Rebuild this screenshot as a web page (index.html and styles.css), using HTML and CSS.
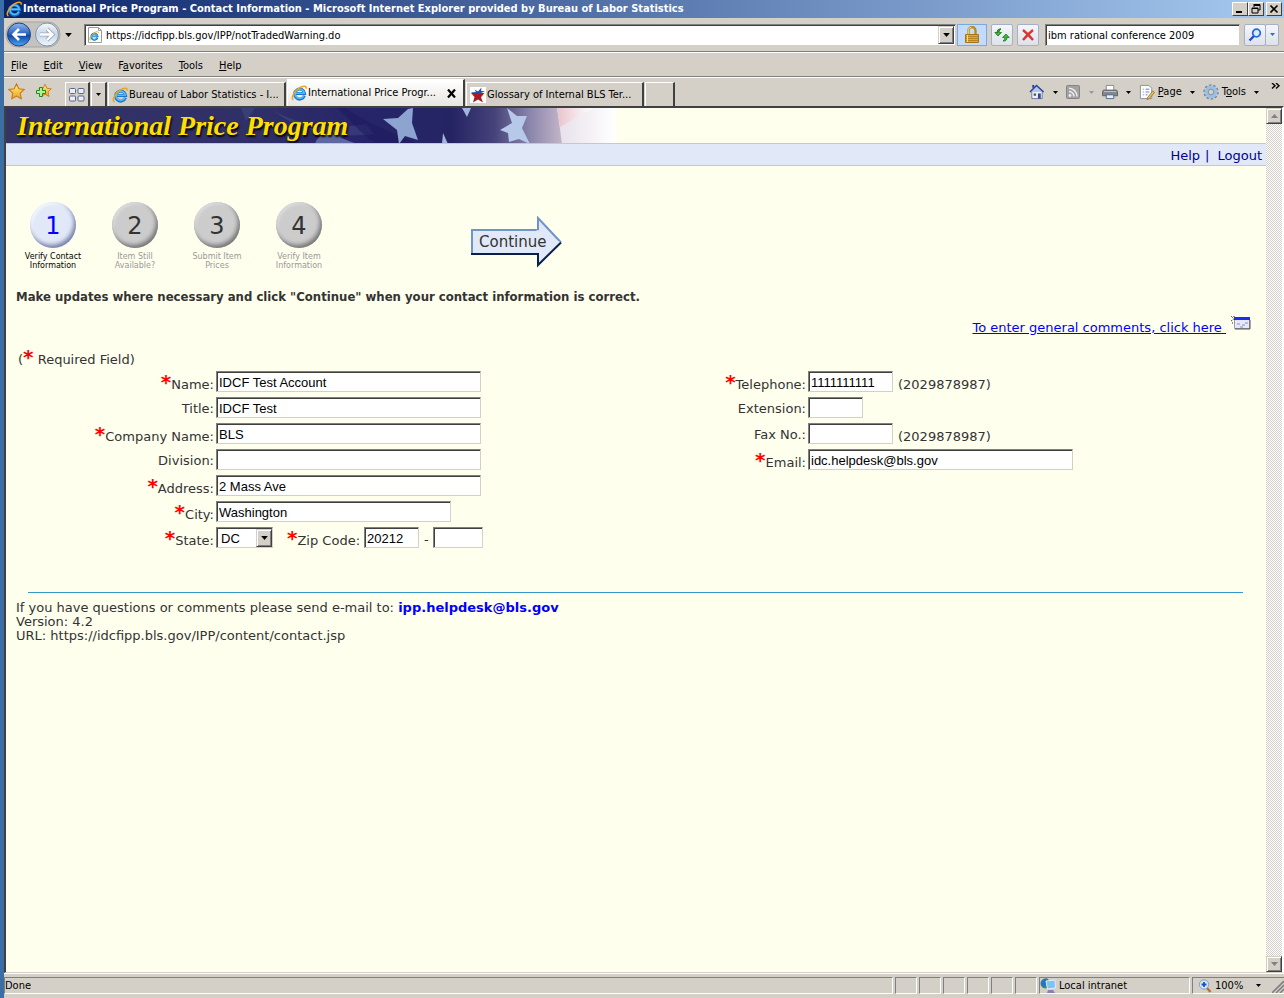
FILE: index.html
```html
<!DOCTYPE html>
<html lang="en">
<head>
<meta charset="utf-8">
<title>International Price Program - Contact Information</title>
<link rel="stylesheet" href="styles.css">
</head>
<body>
<svg class="defs" aria-hidden="true">
  <defs>
    <linearGradient id="gBlue" x1="0" y1="0" x2="0" y2="1"><stop offset="0" stop-color="#8fb8ea"/><stop offset=".45" stop-color="#2f67c4"/><stop offset=".55" stop-color="#1248a8"/><stop offset="1" stop-color="#4aa8f4"/></linearGradient>
    <linearGradient id="gPale" x1="0" y1="0" x2="0" y2="1"><stop offset="0" stop-color="#f4f8fc"/><stop offset=".5" stop-color="#c8d6e8"/><stop offset="1" stop-color="#f0f8ff"/></linearGradient>
    <linearGradient id="gStar" x1="0" y1="0" x2="0" y2="1"><stop offset="0" stop-color="#fff27a"/><stop offset="1" stop-color="#f0a020"/></linearGradient>
    <linearGradient id="gFlag" x1="0" y1="0" x2="1" y2="0"><stop offset="0" stop-color="#333366"/><stop offset=".4" stop-color="#303068"/><stop offset=".58" stop-color="#26256a"/><stop offset=".73" stop-color="#252463"/><stop offset=".8" stop-color="#45427a"/><stop offset=".86" stop-color="#8b86ac"/><stop offset=".91" stop-color="#c2b4c8"/><stop offset="1" stop-color="#ffffff"/></linearGradient>
    <linearGradient id="gPink" x1="0" y1="0" x2="1" y2="0"><stop offset="0" stop-color="#e8c4cc"/><stop offset="1" stop-color="#ffffff"/></linearGradient>
    <linearGradient id="gStripe" x1="0" y1="0" x2="1" y2="0"><stop offset="0" stop-color="#e6e0ea"/><stop offset="1" stop-color="#ffffff"/></linearGradient>
  </defs>
  <symbol id="ie" viewBox="0 0 16 16">
    <path d="M13.400 10.600A5 5 0 1 1 13.600 8.600H4.600" fill="none" stroke="#1c74cc" stroke-width="3"/>
    <path d="M12.900 10.400A4.600 4.600 0 1 1 13.200 8.300H4.800" fill="none" stroke="#4fbcf6" stroke-width="1.600"/>
    <path d="M2.400 15C-.6 13.600 3 6.600 8 3.200 12 .4 15.600.4 15.200 3.600" fill="none" stroke="#eea51c" stroke-width="1.500"/>
  </symbol>
  <symbol id="star" viewBox="0 0 16 16"><path d="M8 .8l2.200 4.700 5 .6-3.700 3.500 1 5.200L8 12.300l-4.500 2.500 1-5.200L.8 6.100l5-.6z" fill="url(#gStar)" stroke="#c8791a"/></symbol>
  <symbol id="caret" viewBox="0 0 5 3"><path d="M0 0h5L2.500 3z"/></symbol>
</svg>

<div class="window">
  <header class="titlebar">
    <svg class="i16"><use href="#ie"/></svg>
    <span class="title">International Price Program - Contact Information - Microsoft Internet Explorer provided by Bureau of Labor Statistics</span>
    <span class="winbtns">
      <button class="wb" aria-label="Minimize"><svg viewBox="0 0 12 10"><path d="M2 7h6v2H2z"/></svg></button>
      <button class="wb" aria-label="Restore"><svg viewBox="0 0 12 10"><path d="M4 .5h6V6H8M4 1.500h6M4 0v3M2 4h6v5H2zM2 4.500h6" fill="none" stroke="#000"/></svg></button>
      <button class="wb wbclose" aria-label="Close"><svg viewBox="0 0 12 10"><path d="M2.500 1.500l7 7m0-7l-7 7" stroke="#000" stroke-width="1.700"/></svg></button>
    </span>
  </header>

  <div class="navbar">
    <div class="nav">
      <button class="plain" aria-label="Back and forward"><svg width="56" height="28" viewBox="0 0 56 28">
        <rect x="1" y="1" width="54" height="25" rx="12" fill="#c4c2be" stroke="#a8a6a0"/>
        <circle cx="14" cy="13.500" r="11.500" fill="url(#gBlue)" stroke="#243f80"/>
        <path d="M21 13.500H9M14 8l-5.500 5.500L14 19" fill="none" stroke="#fff" stroke-width="2.600"/>
        <circle cx="42" cy="13.500" r="11.500" fill="url(#gPale)" stroke="#8294ac"/>
        <path d="M35 13.500h12M42 8l5.500 5.500L42 19" fill="none" stroke="#98a8bd" stroke-width="4"/>
        <path d="M35 13.500h12M42 8l5.500 5.500L42 19" fill="none" stroke="#fff" stroke-width="2.400"/>
      </svg></button>
      <svg class="c7"><use href="#caret"/></svg>
    </div>
    <div class="sunken address">
      <svg class="i16" viewBox="0 0 16 16"><path d="M1.500.5h10l3 3v12h-13z" fill="#fff" stroke="#9a9a9a"/><path d="M11.500.5v3h3" fill="none" stroke="#9a9a9a"/><use href="#ie" x="2" y="4" width="10" height="10"/></svg>
      <input class="ui" aria-label="Address" value="https://idcfipp.bls.gov/IPP/notTradedWarning.do">
      <button class="raised drop" aria-label="Address list"><svg class="c7"><use href="#caret"/></svg></button>
    </div>
    <button class="lock" aria-label="Security report"><svg width="16" height="18" viewBox="0 0 16 18"><path d="M4.500 9V4.500a3.500 3.500 0 0 1 7 0V9" fill="none" stroke="#b98a1c" stroke-width="2.400"/><path d="M4.300 8V4.500a3.500 3.500 0 0 1 3-3.400" fill="none" stroke="#f4dc86"/><path d="M1.500 8.500h13v8h-13z" fill="#dfa83a" stroke="#a97411"/><path d="M2 10.500h12M2 12.500h12M2 14.500h12" stroke="#b98420"/><path d="M3.500 9v7" stroke="#f7dc8c"/></svg></button>
    <button class="tool" aria-label="Refresh"><svg width="16" height="16" viewBox="0 0 16 16"><path d="M6.500 1.500L3.200 6M.8 5.500L4 9l3.500-3.500H5.300C5.200 4 5.500 3 7 2 4 1.500 3 3.500 3 5.500z" fill="#3fb53a" stroke="#177a1c" stroke-width=".8"/><path d="M15.200 10.500L12 7l-3.500 3.500h2.200c.1 1.500-.2 2.500-1.700 3.500 3 .5 4-1.500 4-3.500z" fill="#3fb53a" stroke="#177a1c" stroke-width=".8"/></svg></button>
    <button class="tool" aria-label="Stop"><svg width="14" height="14" viewBox="0 0 14 14"><path d="M2 2q5 4 10 10M12 2Q7 6 2 12" stroke="#d83434" stroke-width="2.400" fill="none"/></svg></button>
    <input class="sunken ui search" aria-label="Search" value="ibm rational conference 2009">
    <div class="find">
      <button class="tool" aria-label="Search web"><svg width="14" height="14" viewBox="0 0 14 14"><circle cx="8.500" cy="5" r="3.800" fill="#d8eefc" stroke="#2a6ae0" stroke-width="1.800"/><path d="M6 8l-4.500 4.500" stroke="#1d50c8" stroke-width="2.400"/></svg></button>
      <button class="tool small" aria-label="Search options"><svg class="c5 blue"><use href="#caret"/></svg></button>
    </div>
  </div>

  <nav class="menubar">
    <button class="plain"><u>F</u>ile</button><button class="plain"><u>E</u>dit</button><button class="plain"><u>V</u>iew</button><button class="plain">F<u>a</u>vorites</button><button class="plain"><u>T</u>ools</button><button class="plain"><u>H</u>elp</button>
  </nav>

  <div class="tabrow">
    <div class="favs">
      <button class="plain" aria-label="Favorites Center"><svg class="i17"><use href="#star"/></svg></button>
      <button class="plain" aria-label="Add to Favorites"><svg width="17" height="17" viewBox="0 0 17 17"><use href="#star" x="3" y="0" width="14" height="15"/><path d="M4.500 4.500h3v3h3v3h-3v3h-3v-3h-3v-3h3z" fill="#aef09a" stroke="#1c8a1c"/></svg></button>
    </div>
    <div class="tabs">
      <button class="tab quick" aria-label="Quick Tabs"><svg width="16" height="14" viewBox="0 0 16 14" fill="#eceff8" stroke="#5b6484"><rect x=".5" y=".5" width="6" height="5" rx="1"/><rect x="9" y=".5" width="6" height="5" rx="1"/><rect x=".5" y="8" width="6" height="5" rx="1"/><rect x="9" y="8" width="6" height="5" rx="1"/></svg></button>
      <button class="tab list" aria-label="Tab list"><svg class="c5"><use href="#caret"/></svg></button>
      <button class="tab page"><svg class="i16"><use href="#ie"/></svg>Bureau of Labor Statistics - I...</button>
      <button class="tab page active"><svg class="i16"><use href="#ie"/></svg>International Price Progr...<svg class="x" viewBox="0 0 10 9"><path d="M1 .5l7 8M8 .5l-7 8" stroke="#000" stroke-width="2.200"/></svg></button>
      <button class="tab page"><svg class="i16" viewBox="0 0 16 16"><path d="M0 0h16v16H0z" fill="#fff"/><path d="M1 6h13.500l-3.500 4.200 2 5.300-5-3-5 3 1.500-5.500z" fill="#b01820"/><path d="M4.500 2.500L8 4.500 11.500.5 11 4h4l-5 2.500H4L.8 5.500 6 5z" fill="#1c4fac"/></svg>Glossary of Internal BLS Ter...</button>
      <button class="tab blank" aria-label="New Tab"></button>
    </div>
    <div class="commands">
      <button class="plain" aria-label="Home"><svg width="16" height="16" viewBox="0 0 17 17"><path d="M3 8h11v7.500H3z" fill="#eef2fb" stroke="#6b7698"/><path d="M1 8.500L8 1.500l7.500 7" fill="#b4c4ea" stroke="#2a3f94" stroke-width="1.500"/><path d="M3.500 1h2v3h-2z" fill="#2a3f94"/><path d="M9.500 10h3v5.500h-3z" fill="#34489c"/><path d="M5 10h2.500v2.500H5z" fill="#555"/></svg></button><svg class="c5"><use href="#caret"/></svg>
      <button class="plain" aria-label="Feeds"><svg width="15" height="15" viewBox="0 0 15 15"><rect x=".5" y=".5" width="13" height="13" rx="1" fill="#a2a2a2" stroke="#858585"/><circle cx="4" cy="10.500" r="1.400" fill="#eee"/><path d="M3 6.500a5 5 0 0 1 5 5M3 3.300a8 8 0 0 1 8 8.200" fill="none" stroke="#eee" stroke-width="1.500"/></svg></button><svg class="c5 off"><use href="#caret"/></svg>
      <button class="plain" aria-label="Print"><svg width="16" height="16" viewBox="0 0 17 17"><path d="M4.500 1.500h8v6h-8z" fill="#fff" stroke="#888"/><path d="M1.500 6.500h14l1 2v4h-16v-4z" fill="#85878c" stroke="#5d5f64"/><path d="M2 8h13" stroke="#c4c4c4"/><path d="M4.500 11.500h8v4h-8z" fill="#e8f0f8" stroke="#4a6a8c"/><path d="M13 9.500h2" stroke="#4ac84a"/></svg></button><svg class="c5"><use href="#caret"/></svg>
      <button class="plain"><svg width="16" height="16" viewBox="0 0 17 17"><path d="M1.500 1.500h9l3 3v11h-12z" fill="#fff" stroke="#8a8f9e"/><path d="M4 5.500h1m2 0h4M4 8.500h1m2 0h4M4 11.500h1m2 0h2" stroke="#5577bb"/><path d="M9 14.500l5.500-7 2 1.500-5.500 6.500-2.500 1z" fill="#f0c050" stroke="#8a6420" stroke-width=".8"/></svg><span><u>P</u>age</span></button><svg class="c5"><use href="#caret"/></svg>
      <button class="plain"><svg width="16" height="16" viewBox="0 0 17 17"><circle cx="8.500" cy="8.500" r="7.200" fill="none" stroke="#7088a4" stroke-width="2" stroke-dasharray="2.600 1.900"/><circle cx="8.500" cy="8.500" r="5" fill="#d4d0c8" stroke="#9cc0e0" stroke-width="3.600"/><circle cx="8.500" cy="8.500" r="3" fill="#d4d0c8" stroke="#6080a0" stroke-width=".8"/></svg><span>T<u>o</u>ols</span></button><svg class="c5"><use href="#caret"/></svg>
      <button class="plain more" aria-label="More commands"><svg width="9" height="6" viewBox="0 0 9 6"><path d="M1 0l3 2.700-3 2.700M5 0l3 2.700-3 2.700" fill="none" stroke="#000" stroke-width="1.400"/></svg></button>
    </div>
  </div>

  <div class="viewport">
    <main class="document">
      <div class="banner">
        <svg width="610" height="36" viewBox="0 0 610 36" aria-hidden="true">
          <path d="M0 0h610v36H0z" fill="url(#gFlag)"/>
          <path d="M235 0h14l-9 13zM265 0c20 16 60 22 95 16l8 10c-45 6-85-8-103-26z" fill="#46508c" opacity=".45"/>
          <path d="M309 36c2-8 12-14 20-8l-2-6 8 8 16 6z" fill="#7583b8" opacity=".7"/>
          <path d="M340 0c22 16 42 22 72 36h-40C350 24 345 10 330 0z" fill="#1d1a5c" opacity=".55"/>
          <path d="M377 11l15-1L402 1l5-1-1 15 6 17-13-4-6 8-2-14z" fill="#8da3d0"/>
          <path d="M456 0h9l-4 9z" fill="#a5b4da"/><path d="M437 25l5 11h-6z" fill="#a5b4da"/>
          <path d="M494 22l12-7-5-15 10 8h10l-5 12 8 16-11-5-10 3-1-9z" fill="#b7c9e8"/>
          <path d="M551 0h59v36h-54l-2-15z" fill="url(#gStripe)"/>
          <path d="M551 0h36l-33 19z" fill="url(#gPink)"/>
        </svg>
        <h1>International Price Program</h1>
      </div>
      <div class="linkbar"><a href="#help">Help</a><span>|</span><a href="#logout">Logout</a></div>

      <div class="content">
        <div class="steps">
          <div class="step current"><span class="ball">1</span><span class="cap">Verify Contact<br>Information</span></div>
          <div class="step"><span class="ball">2</span><span class="cap">Item Still<br>Available?</span></div>
          <div class="step"><span class="ball">3</span><span class="cap">Submit Item<br>Prices</span></div>
          <div class="step"><span class="ball">4</span><span class="cap">Verify Item<br>Information</span></div>
          <button class="plain continue" form="contact"><svg width="92" height="52" viewBox="0 0 92 52" aria-hidden="true"><path d="M1 38V14h66V2l23 24.500" fill="#e1e8f7" stroke="#6f94c8" stroke-width="2"/><path d="M1 38h66v12l23-23.500L67 14" fill="#e1e8f7"/><path d="M0 38h67v11l23-22.500" fill="none" stroke="#0a1f4c" stroke-width="2"/></svg><span>Continue</span></button>
        </div>

        <p class="lead">Make updates where necessary and click "Continue" when your contact information is correct.</p>
        <p class="comments"><a href="#comments">To enter general comments, click here&nbsp;</a><svg width="20" height="14" viewBox="0 0 20 14" aria-hidden="true"><path d="M3.500 2.500h15v10h-15z" fill="#e4e8f8" stroke="#9a9aa8"/><path d="M3 1h16v3H3z" fill="#1a2ef0"/><path d="M19 4v9H4" fill="none" stroke="#555" /><path d="M6 8h3m2 1h3m-5 2h3m2-4h3" stroke="#7d8fdc"/><path d="M0 0l4 4M0 5l3-2M3 0v2M1 7h2" stroke="#222" stroke-dasharray="1 1"/></svg></p>
        <p class="required">(<b class="ast">*</b> Required Field)</p>

        <form id="contact" class="form">
          <div class="fields left">
            <label class="req" for="name"><b class="ast">*</b>Name:</label><div><input class="sunken w265" id="name" value="IDCF Test Account"></div>
            <label for="jobtitle">Title:</label><div><input class="sunken w265" id="jobtitle" value="IDCF Test"></div>
            <label class="req" for="company"><b class="ast">*</b>Company Name:</label><div><input class="sunken w265" id="company" value="BLS"></div>
            <label for="division">Division:</label><div><input class="sunken w265" id="division"></div>
            <label class="req" for="address"><b class="ast">*</b>Address:</label><div><input class="sunken w265" id="address" value="2 Mass Ave"></div>
            <label class="req" for="city"><b class="ast">*</b>City:</label><div><input class="sunken w235" id="city" value="Washington"></div>
            <label class="req" for="state"><b class="ast">*</b>State:</label>
            <div><span class="selectbox"><select class="sunken" id="state"><option>DC</option></select><span class="raised arrow"><svg class="c7"><use href="#caret"/></svg></span></span>
              <label class="req zip" for="zip"><b class="ast">*</b>Zip Code:</label><input class="sunken w55" id="zip" value="20212"><span class="dash">-</span><input class="sunken w50" aria-label="Zip code extension"></div>
          </div>
          <div class="fields right">
            <label class="req" for="tel"><b class="ast">*</b>Telephone:</label><div><input class="sunken w85" id="tel" value="1111111111"><span class="hint">(2029878987)</span></div>
            <label for="ext">Extension:</label><div><input class="sunken w55" id="ext"></div>
            <label for="fax">Fax No.:</label><div><input class="sunken w85" id="fax"><span class="hint">(2029878987)</span></div>
            <label class="req" for="email"><b class="ast">*</b>Email:</label><div><input class="sunken w265" id="email" value="idc.helpdesk@bls.gov"></div>
          </div>
        </form>

        <hr>
        <footer class="foot">
          <p>If you have questions or comments please send e-mail to: <a href="mailto:ipp.helpdesk@bls.gov">ipp.helpdesk@bls.gov</a></p>
          <p>Version: 4.2</p>
          <p>URL: https://idcfipp.bls.gov/IPP/content/contact.jsp</p>
        </footer>
      </div>
    </main>
    <div class="scroll">
      <button class="raised" aria-label="Scroll up"><svg class="c7 gray" viewBox="0 0 7 4"><path d="M0 4h7L3.500 0z"/></svg></button>
      <button class="raised" aria-label="Scroll down"><svg class="c7 gray" viewBox="0 0 7 4"><path d="M0 0h7L3.500 4z"/></svg></button>
    </div>
  </div>

  <div class="status">
    <span class="cell grow">Done</span><span class="cell box"></span><span class="cell box"></span><span class="cell box"></span><span class="cell box"></span><span class="cell box"></span><span class="cell box"></span>
    <span class="cell zone"><svg class="i16" viewBox="0 0 16 16"><circle cx="5.500" cy="5.500" r="5" fill="#2f9a48"/><path d="M1 4q4-5 7-3-4 3-1 5-3 2-3 4-3-2-3-6z" fill="#2c6fd0"/><path d="M6 3l9-1 .5 8-8 1z" fill="#7cc4f6" stroke="#e4ecf8"/><path d="M8 12h5l2 3H7z" fill="#8a80b8"/></svg>Local intranet</span>
    <span class="cell zoom"><svg class="i14" viewBox="0 0 14 14"><path d="M9 9l3.500 4" stroke="#b8722c" stroke-width="2.400"/><circle cx="6" cy="5.500" r="4.600" fill="#d8ecfc" stroke="#7d9cc4"/><path d="M6 3v5M3.500 5.500h5" stroke="#1a50d0" stroke-width="1.800"/></svg>100%<svg class="c5"><use href="#caret"/></svg><svg class="grip" viewBox="0 0 12 12"><path d="M0 12L12 0M4 12l8-8M8 12l4-4" stroke="#808080" stroke-width="1.600"/></svg></span>
  </div>
</div>
</body>
</html>
```
FILE: styles.css
```css
* { box-sizing: border-box; }
body {
  margin: 0;
  background: #3a6ea5;
  color: #333;
  font: 13px/14px "DejaVu Sans", Verdana, sans-serif;
}
p, h1 { margin: 0; }
svg { display: block; flex: none; }
button, input, select { font: inherit; color: #000; }
button { padding: 0; }
.defs { position: absolute; width: 0; height: 0; }
.window {
  min-height: 100vh;
  margin-left: 4px;
  display: flex;
  flex-direction: column;
  background: #d4d0c8;
  color: #000;
  font: 11px/14px "DejaVu Sans Condensed", Tahoma, sans-serif;
}
.i14 { width: 14px; height: 14px; }
.i16 { width: 16px; height: 16px; }
.i17 { width: 17px; height: 17px; }
.c7 { width: 7px; height: 4px; }
.c5 { width: 5px; height: 3px; }
.blue { fill: #2a6ae0; }
.gray { fill: #808080; }
.off { fill: #999; }
.plain { border: 0; background: none; }
.sunken {
  border: 1px solid;
  border-color: #808080 #d4d0c8 #d4d0c8 #808080;
  box-shadow: inset 1px 1px #404040;
  background: #fff;
  border-radius: 0;
  outline: 0;
}
.raised {
  display: flex;
  align-items: center;
  justify-content: center;
  border: 1px solid;
  border-color: #d4d0c8 #404040 #404040 #d4d0c8;
  box-shadow: inset 1px 1px #fff, inset -1px -1px #808080;
  background: #d4d0c8;
}

/* Title bar */
.titlebar {
  display: flex;
  align-items: center;
  gap: 1px;
  height: 18px;
  padding: 0 2px;
  background: linear-gradient(90deg, #0a246a, #a6caf0);
}
.title { flex: 1; min-width: 0; overflow: hidden; white-space: nowrap; color: #fff; font-weight: bold; }
.winbtns { display: flex; }
.wb {
  width: 16px;
  height: 14px;
  border: 1px solid;
  border-color: #fff #404040 #404040 #fff;
  background: #d4d0c8;
}
.wb svg { width: 12px; height: 10px; margin: auto; }
.wbclose { margin-left: 2px; }

/* Navigation bar */
.navbar {
  display: flex;
  align-items: center;
  height: 34px;
  padding: 0 5px 0 1px;
  border-bottom: 1px solid #808080;
}
.nav { display: flex; align-items: center; gap: 4px; width: 79px; }
.address { flex: 1; display: flex; align-items: center; height: 22px; padding: 1px 1px 0 2px; }
.address input { flex: 1; min-width: 0; margin-left: 1px; border: 0; outline: 0; background: none; }
.drop { width: 16px; height: 18px; }
.ui { height: 17px; padding: 1px 2px 0; }
.lock {
  display: grid;
  place-items: center;
  width: 30px;
  height: 22px;
  margin: 0 4px 0 1px;
  border: 1px solid #7da7e0;
  background: #c2dcff;
}
.tool {
  display: grid;
  place-items: center;
  width: 22px;
  height: 22px;
  margin-right: 4px;
  border: 1px solid #a3b0c8;
  border-radius: 2px;
  background: linear-gradient(#f4f6fa, #dde2ea);
}
.search { width: 195px; height: 22px; margin: 0 4px 0 2px; }
.find { display: flex; }
.find .tool { margin: 0; }
.find .small { width: 14px; margin-left: -1px; }

/* Menu bar */
.menubar {
  display: flex;
  gap: 16px;
  height: 25px;
  padding: 2px 0 0 7px;
  border-top: 1px solid #fff;
  border-bottom: 1px solid #808080;
}

/* Tabs and commands */
.tabrow {
  display: flex;
  height: 29px;
  border-top: 1px solid #fff;
}
.favs { display: flex; gap: 10px; width: 61px; padding: 0 4px 2px; }
.tabs { display: flex; align-items: flex-end; gap: 1px; }
.tab {
  display: flex;
  align-items: center;
  height: 24px;
  border: solid;
  border-width: 1px 2px 0 1px;
  border-color: #fff #404040 #404040 #fff;
  background: #d4d0c8;
  white-space: nowrap;
}
.quick { width: 25px; justify-content: center; }
.list { width: 16px; justify-content: center; }
.page { width: 178px; padding-left: 3px; gap: 1px; }
.active { height: 27px; background: linear-gradient(#fff, #e8e6e0); }
.x { width: 10px; height: 9px; margin: 0 6px 0 auto; }
.blank { width: 30px; }
.commands { display: flex; align-items: center; gap: 8px; margin-left: auto; padding-right: 4px; }
.commands .plain { display: flex; align-items: center; gap: 3px; }
.commands .more { align-self: flex-start; padding: 5px 0 0 4px; }

/* Page viewport */
.viewport {
  flex: 1;
  display: flex;
  border: solid;
  border-width: 2px 2px 1px 2px;
  border-color: #404040 #fff #d4d0c8 #404040;
}
.document {
  flex: 1;
  min-width: 0;
  background: #ffffee;
  color: #333;
  font: 13px/14px "DejaVu Sans", Verdana, sans-serif;
}
.banner { display: grid; height: 35px; overflow: hidden; }
.banner > * { grid-area: 1 / 1; }
.banner h1 {
  padding-left: 11px;
  color: #ffdf00;
  font: italic bold 28px/35px "Liberation Serif", serif;
  text-shadow: 1px 2px 2px #000;
}
.linkbar {
  display: flex;
  justify-content: flex-end;
  align-items: center;
  gap: 5px;
  height: 23px;
  padding: 2px 4px 0 0;
  border: solid #c8c8c8;
  border-width: 1px 0;
  background: #e1e8f7;
  color: #000099;
}
.linkbar a { color: #000099; text-decoration: none; }
.linkbar a:last-child { margin-left: 3px; }
.content { padding: 36px 10px 0; }

/* Progress steps */
.steps { display: flex; align-items: flex-start; margin-left: -4px; }
.step { display: flex; flex-direction: column; align-items: center; width: 82px; gap: 4px; color: #999; text-align: center; }
.ball {
  display: grid;
  place-items: center;
  width: 46px;
  height: 46px;
  padding-top: 2px;
  border-radius: 50%;
  background: #ccc;
  box-shadow: inset -2px -3px 4px #777, inset 2px 2px 3px #ddd;
  color: #333;
  font-size: 24px;
}
.current .ball { background: #e1e8f7; box-shadow: inset -2px -3px 4px #7780aa, inset 2px 2px 3px #f4f7ff; color: #00f; }
.cap { font-size: 8px; line-height: 9px; }
.current .cap { color: #000; }
.continue { display: grid; margin: 14px 0 0 131px; }
.continue > * { grid-area: 1 / 1; }
.continue span { align-self: center; padding-left: 8px; text-align: left; color: #333; font-size: 15px; }

.lead { margin-top: 20px; font-family: "DejaVu Sans Condensed", Verdana, sans-serif; font-weight: bold; }
.comments { display: flex; justify-content: flex-end; gap: 5px; margin-top: 12px; padding-right: 5px; }
.comments a { margin-top: 5px; color: #00f; }
.required { margin: 18px 0 4px 2px; }
.ast { color: #f00; font-size: 20px; line-height: 0; }

/* Contact form */
.form { display: grid; grid-template-columns: 1fr 1fr; }
.fields { display: grid; gap: 5px 2px; align-content: start; align-items: center; grid-auto-rows: 21px; }
.left { grid-template-columns: 198px 1fr; }
.right { grid-template-columns: 170px 1fr; }
.fields label { text-align: right; white-space: nowrap; padding-top: 3px; }
.fields label.req { padding-top: 7px; }
.fields > div { display: flex; align-items: center; }
.fields input, .fields select { height: 21px; padding: 2px 2px 0; font: 13px/15px "Liberation Sans", Arial, sans-serif; }
.w265 { width: 265px; }
.w235 { width: 235px; }
.w85 { width: 85px; }
.w55 { width: 55px; }
.w50 { width: 50px; }
.selectbox { position: relative; }
.fields select { display: block; width: 57px; padding-left: 4px; appearance: none; }
.arrow { position: absolute; top: 2px; right: 1px; width: 16px; height: 18px; pointer-events: none; }
.zip { margin: 0 4px 0 14px; }
.dash { margin: 4px 4px 0 5px; }
.hint { margin: 7px 0 0 5px; }

hr { height: 1px; margin: 44px 13px 8px 12px; border: 0; background: #3399cc; }
.foot a { color: #00f; font-weight: bold; text-decoration: none; }

/* Scroll bar */
.scroll {
  display: flex;
  flex-direction: column;
  justify-content: space-between;
  width: 16px;
  background: repeating-conic-gradient(#fff 0 25%, #d4d0c8 0 50%) 0 0 / 2px 2px;
}
.scroll button { width: 16px; height: 16px; }

/* Status bar */
.status {
  display: flex;
  gap: 2px;
  height: 25px;
  padding: 3px 0 4px;
  border-top: 1px solid #fff;
}
.cell {
  display: flex;
  align-items: center;
  gap: 3px;
  border: 1px solid;
  border-color: #808080 #fff #fff #808080;
}
.grow { flex: 1; }
.box { width: 22px; }
.zone { width: 151px; }
.zoom { width: 92px; padding-left: 5px; border-right: 0; }
.zoom .c5 { margin-left: 10px; }
.grip { width: 12px; height: 12px; margin-left: auto; align-self: flex-end; }
```
